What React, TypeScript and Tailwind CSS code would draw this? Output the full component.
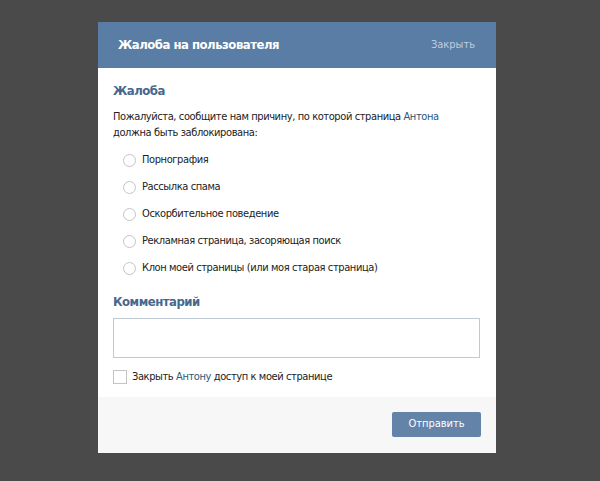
const REASONS = [
  "Порнография",
  "Рассылка спама",
  "Оскорбительное поведение",
  "Рекламная страница, засоряющая поиск",
  "Клон моей страницы (или моя старая страница)",
];

const FONT = "font-['DejaVu_Sans_Condensed','DejaVu_Sans',Tahoma,sans-serif]";

export default function App() {
  return (
    <div className={`min-h-[481px] w-[600px] bg-[#4a4a4a] pt-[22px] ${FONT}`}>
      <div className="ml-[98px] w-[398px] bg-white">
        {/* Header */}
        <div className="flex h-[46px] items-center justify-between bg-[#5a7da5] pl-[20px] pr-[21px]">
          <span className="text-[13px] font-bold tracking-[-0.5px] text-white">Жалоба на пользователя</span>
          <span className="text-[11px] text-[#bccde0]">Закрыть</span>
        </div>

        {/* Body */}
        <div className="px-[15px] pt-[15px] pb-[11px] text-[11px] tracking-[-0.4px] text-[#222]">
          <h3 className="text-[13px] font-bold leading-[16px] tracking-[-0.5px] text-[#45688e]">Жалоба</h3>
          <p className="mt-[10px] leading-[16px]">
            Пожалуйста, сообщите нам причину, по которой страница{" "}
            <span className="text-[#2b587a]">Антона</span>
            <br />
            должна быть заблокирована:
          </p>

          <div className="mt-[6px] ml-[10px] flex flex-col">
            {REASONS.map((r) => (
              <label key={r} className="flex h-[27px] items-center gap-[6px]">
                <span className="h-[13px] w-[13px] rounded-full border border-[#c4c4c4] bg-white" />
                {r}
              </label>
            ))}
          </div>

          <h3 className="mt-[12px] text-[13px] font-bold leading-[16px] tracking-[-0.5px] text-[#45688e]">
            Комментарий
          </h3>
          <div className="mt-[8px] h-[40px] w-[367px] border border-[#c0cad5] bg-white" />

          <label className="mt-[11px] flex items-center gap-[5px]">
            <span className="h-[14px] w-[14px] border border-[#c4c4c4] bg-white" />
            <span>
              Закрыть <span className="text-[#2b587a]">Антону</span> доступ к моей странице
            </span>
          </label>
        </div>

        {/* Footer */}
        <div className="flex h-[56px] items-center justify-end bg-[#f7f7f7] pr-[15px]">
          <button className="h-[25px] w-[89px] rounded-[2px] bg-[#6383a8] text-[11px] text-white">
            Отправить
          </button>
        </div>
      </div>
    </div>
  );
}
